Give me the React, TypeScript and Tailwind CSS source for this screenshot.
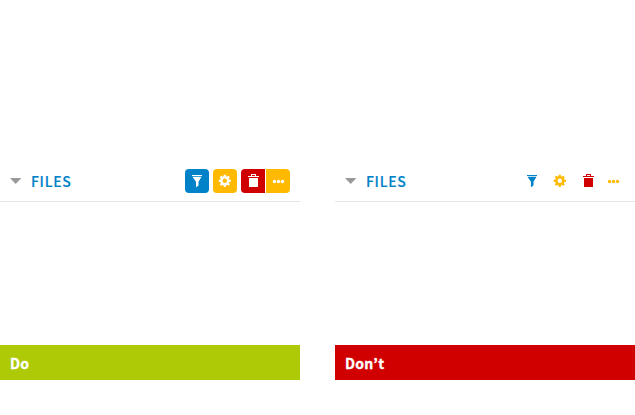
import clsx from "clsx";

const font = "font-['Noto_Sans_CJK_KR','Noto_Sans',sans-serif]";

function FilterIcon() {
  return (
    <svg width="24" height="24" viewBox="0 0 24 24" fill="currentColor">
      <path d="M7 6h10v1H7zM7.5 7.8h9L13.5 12.8V16.6L11 18.3V12.8z" />
    </svg>
  );
}

function GearIcon() {
  const teeth = [0, 45, 90, 135];
  return (
    <svg width="24" height="24" viewBox="0 0 24 24" fill="currentColor">
      {teeth.map((angle) => (
        <path key={angle} transform={`rotate(${angle} 11.8 11.8)`} d="M10.4 8L10.8 5.7h2L13.2 8zM10.4 15.6L10.8 17.9h2L13.2 15.6z" />
      ))}
      <circle cx="11.8" cy="11.8" r="3.4" fill="none" stroke="currentColor" strokeWidth="2.4" />
    </svg>
  );
}

function TrashIcon() {
  return (
    <svg width="24" height="24" viewBox="0 0 24 24" fill="currentColor">
      <path d="M7 7h3V5h5v2h3v1H7zM11 6v1h3V6zM8 9h9v9H8z" fillRule="evenodd" />
    </svg>
  );
}

function DotsIcon() {
  return (
    <svg width="24" height="24" viewBox="0 0 24 24" fill="currentColor">
      <circle cx="8.5" cy="12.5" r="1.65" />
      <circle cx="12.5" cy="12.5" r="1.65" />
      <circle cx="16.5" cy="12.5" r="1.65" />
    </svg>
  );
}

function Example({ filled, label }: { filled: boolean; label: string }) {
  return (
    <section className="w-[300px]">
      <header className="flex h-[42px] items-start border-b border-[#e5e5e5] pl-[10px] pr-[10px] pt-[9px]">
        <svg width="12" height="24" viewBox="0 0 12 24" className="text-[#999999]">
          <path d="M0 9h11.4L5.7 15z" fill="currentColor" />
        </svg>
        <h2 className="ml-[9px] text-[14px] font-medium leading-[25px] tracking-[0.7px] text-[#0082c8] [-webkit-text-stroke:0.15px_#0082c8]">FILES</h2>
        <div className="ml-auto flex">
          <button className={clsx("mr-1 size-6 rounded", filled ? "bg-[#0082c8] text-white" : "text-[#0082c8]")}>
            <FilterIcon />
          </button>
          <button className={clsx("mr-1 size-6 rounded", filled ? "bg-[#ffba00] text-white" : "text-[#ffba00]")}>
            <GearIcon />
          </button>
          <button className={clsx("mr-px size-6 rounded-l", filled ? "bg-[#d00000] text-white" : "text-[#d00000]")}>
            <TrashIcon />
          </button>
          <button className={clsx("size-6 rounded-r", filled ? "bg-[#ffba00] text-white" : "text-[#ffba00]")}>
            <DotsIcon />
          </button>
        </div>
      </header>
      <footer
        className={clsx(
          "mt-[143px] h-[35px] pl-[10px] text-[14px] font-bold leading-[37px] tracking-[0.3px] text-white [-webkit-text-stroke:0.3px_white]",
          filled ? "bg-[#aeca06]" : "bg-[#d00000]",
        )}
      >
        {label}
      </footer>
    </section>
  );
}

export default function App() {
  return (
    <main className={clsx("flex h-[415px] w-[635px] gap-[35px] bg-white pt-[160px]", font)}>
      <Example filled label="Do" />
      <Example filled={false} label="Don’t" />
    </main>
  );
}
